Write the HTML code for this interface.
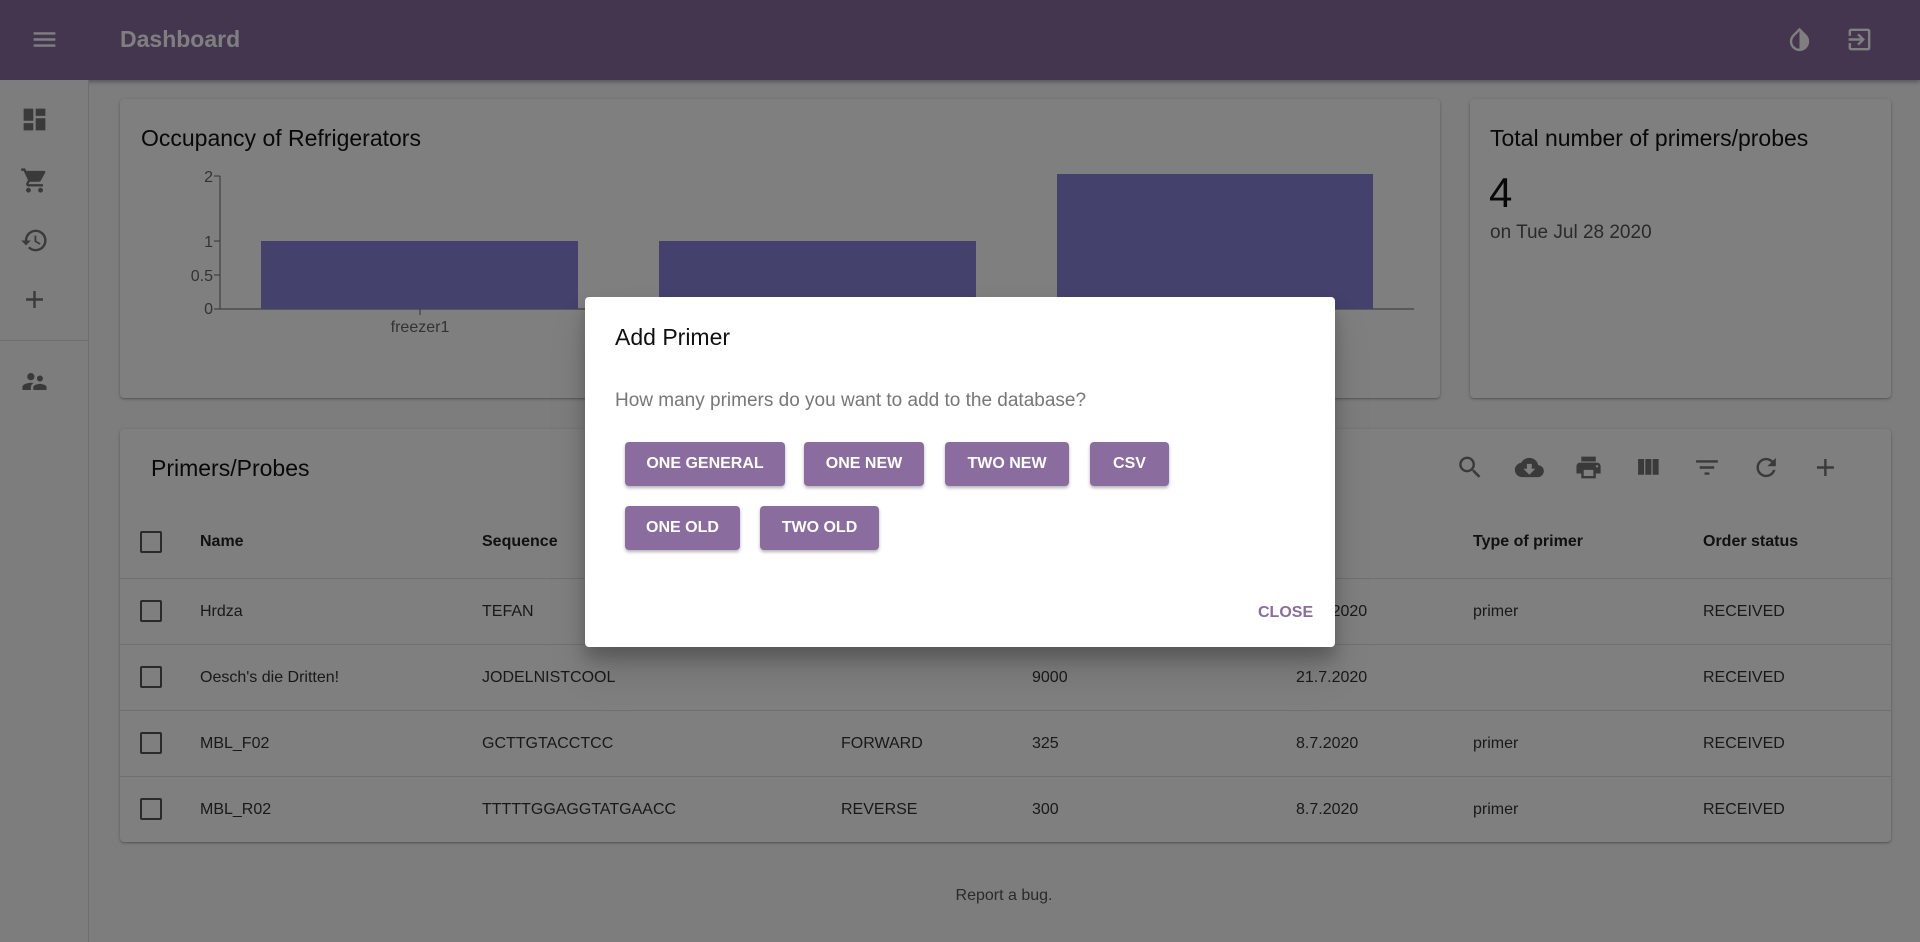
<!DOCTYPE html>
<html><head><meta charset="utf-8"><style>
*{box-sizing:border-box;margin:0;padding:0}
body{width:1920px;height:942px;overflow:hidden;background:#fafafa;font-family:"Liberation Sans",sans-serif;position:relative;color:#222}
.abs{position:absolute}
.bar{left:0;top:0;width:1920px;height:80px;background:#8a6d9e;box-shadow:0 2px 4px rgba(0,0,0,.3)}
.side{left:0;top:80px;width:89px;height:862px;background:#fafafa;border-right:1px solid #ddd}
.card{background:#fff;border-radius:4px;box-shadow:0 1px 3px rgba(0,0,0,.25),0 1px 1px rgba(0,0,0,.12)}
.t{font-size:23px;color:#111}
.hd{font-weight:bold;font-size:16px;color:#222}
.cell{font-size:16px;color:#333}
.line{left:120px;width:1771px;height:1px;background:#e0e0e0}
.cb{width:22px;height:22px;border:2px solid #555;border-radius:2px;left:140px}
.btn{background:#8a6d9e;color:#fff;font-weight:bold;font-size:16px;border-radius:4px;height:44px;line-height:44px;text-align:center;box-shadow:0 2px 3px rgba(0,0,0,.3)}
</style></head><body>
<div class="abs bar">
<svg class="abs" style="left:30px;top:25px" width="29" height="29" viewBox="0 0 24 24"><path d="M3 18h18v-2H3v2zm0-5h18v-2H3v2zm0-7v2h18V6H3z" fill="#fff"/></svg>
<div class="abs" style="left:120px;top:26px;font-size:23px;font-weight:bold;color:#fff">Dashboard</div>
<svg class="abs" style="left:1785px;top:25px" width="29" height="29" viewBox="0 0 24 24"><path d="M17.66 7.93L12 2.27 6.34 7.93a8 8 0 1011.32 0zM12 19.59c-1.6 0-3.110-.62-4.24-1.76A5.95 5.95 0 016 13.59c0-1.6.62-3.11 1.76-4.24L12 5.1v14.49z" fill="#fff"/></svg>
<svg class="abs" style="left:1845px;top:25px" width="29" height="29" viewBox="0 0 24 24"><path d="M10.09 15.59L11.5 17l5-5-5-5-1.41 1.41L12.67 11H3v2h9.67l-2.58 2.59zM19 3H5a2 2 0 00-2 2v4h2V5h14v14H5v-4H3v4a2 2 0 002 2h14c1.1 0 2-.9 2-2V5c0-1.1-.9-2-2-2z" fill="#fff"/></svg>
</div>
<div class="abs side">
<svg class="abs" style="left:20px;top:25px" width="29" height="29" viewBox="0 0 24 24"><path d="M3 13h8V3H3v10zm0 8h8v-6H3v6zm10 0h8V11h-8v10zm0-18v6h8V3h-8z" fill="#757575"/></svg>
<svg class="abs" style="left:20px;top:86px" width="29" height="29" viewBox="0 0 24 24"><path d="M7 18c-1.1 0-2 .9-2 2s.9 2 2 2 2-.9 2-2-.9-2-2-2zM1 2v2h2l3.6 7.59-1.35 2.45A2 2 0 007 17h12v-2H7.42a.25.25 0 01-.22-.37L8.1 13h7.45c.75 0 1.41-.41 1.75-1.03l3.58-6.490A1 1 0 0020 4H5.21l-.94-2H1zm16 16c-1.1 0-2 .9-2 2s.9 2 2 2 2-.9 2-2-.9-2-2-2z" fill="#757575"/></svg>
<svg class="abs" style="left:20px;top:146px" width="29" height="29" viewBox="0 0 24 24"><path d="M13 3a9 9 0 00-9 9H1l3.89 3.89.07.14L9 12H6c0-3.87 3.13-7 7-7s7 3.13 7 7-3.13 7-7 7c-1.93 0-3.68-.79-4.94-2.06l-1.42 1.42A8.95 8.95 0 0013 21a9 9 0 000-18zm-1 5v5l4.28 2.54.72-1.21-3.5-2.08V8H12z" fill="#757575"/></svg>
<svg class="abs" style="left:20px;top:205px" width="29" height="29" viewBox="0 0 24 24"><path d="M19 13h-6v6h-2v-6H5v-2h6V5h2v6h6v2z" fill="#757575"/></svg>
<div class="abs" style="left:0;top:260px;width:89px;height:1px;background:#ddd"></div>
<svg class="abs" style="left:20px;top:287px" width="29" height="29" viewBox="0 0 24 24"><path d="M16.5 12c1.38 0 2.49-1.12 2.49-2.5S17.88 7 16.5 7a2.5 2.5 0 000 5zM9 11c1.66 0 2.99-1.34 2.99-3S10.66 5 9 5C7.34 5 6 6.34 6 8s1.34 3 3 3zm7.5 3c-1.830 0-5.5.92-5.5 2.75V19h11v-2.25c0-1.83-3.67-2.75-5.5-2.75zM9 13c-2.33 0-7 1.17-7 3.5V19h7v-2.25c0-.85.33-2.34 2.37-3.47C10.5 13.1 9.66 13 9 13z" fill="#757575"/></svg>
</div>

<div class="abs card" style="left:120px;top:99px;width:1320px;height:299px">
<div class="abs t" style="left:21px;top:26px">Occupancy of Refrigerators</div>
<svg class="abs" style="left:0;top:0" width="1320" height="299">
<g font-family="Liberation Sans" font-size="16" fill="#666" text-anchor="end">
<text x="93" y="83">2</text><text x="93" y="148">1</text><text x="93" y="182">0.5</text><text x="93" y="215">0</text></g>
<path d="M100 77V210M94 77H100M94 142H100M94 176H100M94 210H1294M300 210V216" stroke="#666" fill="none"/>
<rect x="141" y="142" width="317" height="68" fill="#8884d8"/>
<rect x="539" y="142" width="317" height="68" fill="#8884d8"/>
<rect x="937" y="75" width="316" height="135" fill="#8884d8"/>
<text x="300" y="233" font-family="Liberation Sans" font-size="16" fill="#666" text-anchor="middle">freezer1</text>
</svg>
</div>

<div class="abs card" style="left:1470px;top:99px;width:421px;height:299px">
<div class="abs t" style="left:20px;top:26px">Total number of primers/probes</div>
<div class="abs" style="left:19px;top:70px;font-size:42px;color:#111">4</div>
<div class="abs" style="left:20px;top:123px;font-size:19px;color:#555">on Tue Jul 28 2020</div>
</div>

<div class="abs card" style="left:120px;top:429px;width:1771px;height:413px"></div>
<div class="abs t" style="left:151px;top:455px">Primers/Probes</div>
<svg class="abs" style="left:1455px;top:453px" width="400" height="29" viewBox="0 0 330 24" fill="#757575">
<path d="M15.5 14h-.79l-.28-.27A6.47 6.47 0 0016 9.5 6.5 6.5 0 109.5 16c1.61 0 3.09-.59 4.23-1.57l.27.28v.79l5 4.99L20.49 19l-4.99-5zm-6 0C7.01 14 5 11.99 5 9.5S7.01 5 9.5 5 14 7.01 14 9.5 11.99 14 9.5 14z"/>
<path transform="translate(49 0)" d="M19.35 10.04A7.49 7.49 0 0012 4C9.11 4 6.6 5.64 5.35 8.04A6 6 0 000 14c0 3.31 2.69 6 6 6h13c2.76 0 5-2.24 5-5 0-2.64-2.05-4.78-4.65-4.96zM17 13l-5 5-5-5h3V9h4v4h3z"/>
<path transform="translate(98 0)" d="M19 8H5c-1.66 0-3 1.34-3 3v6h4v4h12v-4h4v-6c0-1.66-1.34-3-3-3zm-3 11H8v-5h8v5zm3-7c-.55 0-1-.45-1-1s.45-1 1-1 1 .45 1 1-.45 1-1 1zm-1-9H6v4h12V3z"/>
<path transform="translate(147 0)" d="M10 18h5V5h-5v13zm-6 0h5V5H4v13zM16 5v13h5V5h-5z"/>
<path transform="translate(196 0)" d="M10 18h4v-2h-4v2zM3 6v2h18V6H3zm3 7h12v-2H6v2z"/>
<path transform="translate(245 0)" d="M17.65 6.35A7.958 7.958 0 0012 4c-4.42 0-7.99 3.58-7.99 8s3.57 8 7.99 8c3.73 0 6.84-2.55 7.73-6h-2.08A5.99 5.99 0 0112 18c-3.31 0-6-2.69-6-6s2.69-6 6-6c1.66 0 3.14.69 4.22 1.78L13 11h7V4l-2.35 2.35z"/>
<path transform="translate(294 0)" d="M19 13h-6v6h-2v-6H5v-2h6V5h2v6h6v2z"/>
</svg>
<div class="abs cb" style="top:531px"></div>
<div class="abs hd" style="left:200px;top:533px">Name</div>
<div class="abs hd" style="left:482px;top:533px">Sequence</div>
<div class="abs hd" style="left:1473px;top:533px">Type of primer</div>
<div class="abs hd" style="left:1703px;top:533px">Order status</div>
<div class="abs line" style="top:578px"></div>
<div class="abs line" style="top:644px"></div>
<div class="abs line" style="top:710px"></div>
<div class="abs line" style="top:776px"></div>
<div class="abs cb" style="top:600px"></div><div class="abs cb" style="top:666px"></div><div class="abs cb" style="top:732px"></div><div class="abs cb" style="top:798px"></div>
<div class="abs cell" style="left:200px;top:603px">Hrdza</div><div class="abs cell" style="left:482px;top:603px">TEFAN</div><div class="abs cell" style="left:1296px;top:603px">28.7.2020</div><div class="abs cell" style="left:1473px;top:603px">primer</div><div class="abs cell" style="left:1703px;top:603px">RECEIVED</div>
<div class="abs cell" style="left:200px;top:669px">Oesch's die Dritten!</div><div class="abs cell" style="left:482px;top:669px">JODELNISTCOOL</div><div class="abs cell" style="left:1032px;top:669px">9000</div><div class="abs cell" style="left:1296px;top:669px">21.7.2020</div><div class="abs cell" style="left:1703px;top:669px">RECEIVED</div>
<div class="abs cell" style="left:200px;top:735px">MBL_F02</div><div class="abs cell" style="left:482px;top:735px">GCTTGTACCTCC</div><div class="abs cell" style="left:841px;top:735px">FORWARD</div><div class="abs cell" style="left:1032px;top:735px">325</div><div class="abs cell" style="left:1296px;top:735px">8.7.2020</div><div class="abs cell" style="left:1473px;top:735px">primer</div><div class="abs cell" style="left:1703px;top:735px">RECEIVED</div>
<div class="abs cell" style="left:200px;top:801px">MBL_R02</div><div class="abs cell" style="left:482px;top:801px">TTTTTGGAGGTATGAACC</div><div class="abs cell" style="left:841px;top:801px">REVERSE</div><div class="abs cell" style="left:1032px;top:801px">300</div><div class="abs cell" style="left:1296px;top:801px">8.7.2020</div><div class="abs cell" style="left:1473px;top:801px">primer</div><div class="abs cell" style="left:1703px;top:801px">RECEIVED</div>
<div class="abs" style="left:0;width:2008px;top:887px;text-align:center;font-size:16px;color:#555">Report a bug.</div>

<div class="abs" style="left:0;top:0;width:1920px;height:942px;background:rgba(0,0,0,.5)"></div>

<div class="abs" style="left:585px;top:297px;width:750px;height:350px;background:#fff;border-radius:4px;box-shadow:0 11px 15px rgba(0,0,0,.2),0 24px 38px rgba(0,0,0,.14)">
<div class="abs" style="left:30px;top:27px;font-size:23px;color:#111">Add Primer</div>
<div class="abs" style="left:30px;top:93px;font-size:19px;color:#777">How many primers do you want to add to the database?</div>
<div class="abs btn" style="left:40px;top:145px;width:160px">ONE GENERAL</div>
<div class="abs btn" style="left:219px;top:145px;width:120px">ONE NEW</div>
<div class="abs btn" style="left:360px;top:145px;width:124px">TWO NEW</div>
<div class="abs btn" style="left:505px;top:145px;width:79px">CSV</div>
<div class="abs btn" style="left:40px;top:209px;width:115px">ONE OLD</div>
<div class="abs btn" style="left:175px;top:209px;width:119px">TWO OLD</div>
<div class="abs" style="left:673px;top:307px;font-size:16px;font-weight:bold;color:#8a6d9e">CLOSE</div>
</div>
</body></html>
